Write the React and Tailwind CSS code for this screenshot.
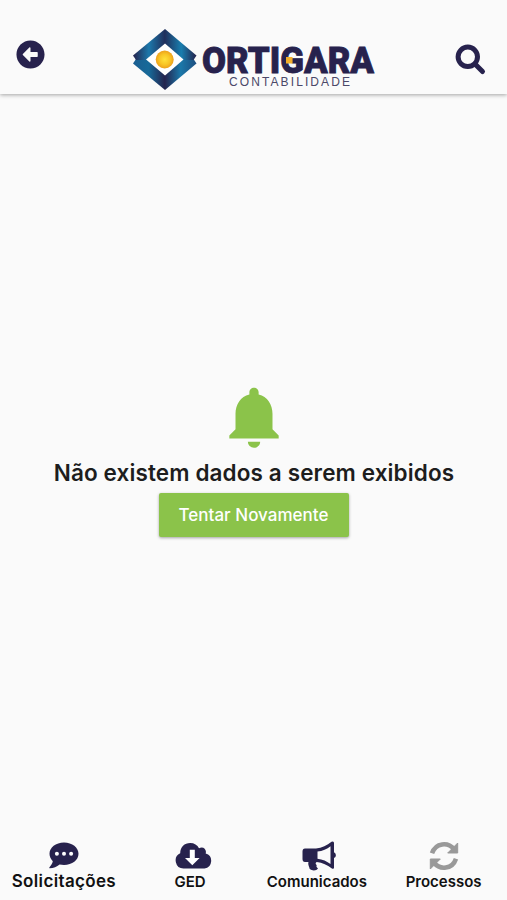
import { FaArrowAltCircleLeft } from "react-icons/fa";
import { MdNotifications } from "react-icons/md";

function Logo() {
  return (
    <svg className="block h-[64px] w-[244px] overflow-visible" viewBox="132 28 244 64" role="img" aria-label="Ortigara Contabilidade">
      <defs>
        <linearGradient id="upperBlue" x1="0" x2="1">
          <stop offset="0" stopColor="#25234c" />
          <stop offset="0.25" stopColor="#1c78ab" />
          <stop offset="0.5" stopColor="#202f5c" />
          <stop offset="0.76" stopColor="#197eae" />
          <stop offset="1" stopColor="#25234c" />
        </linearGradient>
        <linearGradient id="lowerBlue" x1="0" x2="1">
          <stop offset="0" stopColor="#1b5e91" />
          <stop offset="0.25" stopColor="#176a99" />
          <stop offset="0.5" stopColor="#24234d" />
          <stop offset="0.75" stopColor="#1b78a9" />
          <stop offset="1" stopColor="#1d4e80" />
        </linearGradient>
        <radialGradient id="sun">
          <stop offset="0" stopColor="#ffe13c" />
          <stop offset="0.6" stopColor="#f8c425" />
          <stop offset="1" stopColor="#eda01c" />
        </radialGradient>
      </defs>
      <path fill="url(#lowerBlue)" d="M133 63.500 L136 59 H193.500 L196.500 63.500 L165 90Z" />
      <path fill="url(#upperBlue)" d="M165 29 L196.500 55.500 L193.500 60 H136 L133 55.500Z" />
      <path fill="#fff" d="M165 43.500 L183.500 59.500 L165 75.500 L146 59.500Z" />
      <circle cx="164.700" cy="59.500" r="9" fill="url(#sun)" />
      <text x="202" y="72.500" textLength="172" lengthAdjust="spacingAndGlyphs" fill="#27224d" stroke="#27224d" strokeWidth="0.800" className="font-['Roboto',sans-serif] text-[36px] font-black">ORTIGARA</text>
      <rect x="286" y="57" width="6.500" height="6.500" fill="#f3ae2b" />
      <text x="229" y="86" textLength="121" fill="#4b4868" className="font-['Liberation_Sans',sans-serif] text-[12px]">CONTABILIDADE</text>
    </svg>
  );
}

function SearchIcon() {
  return (
    <svg className="block h-8 w-8" viewBox="0 0 32 32" fill="none" stroke="#27224d" aria-hidden="true">
      <circle cx="12.800" cy="12.800" r="9.700" strokeWidth="5" />
      <path d="M20 20 L27.500 27.500" strokeWidth="5" strokeLinecap="round" />
    </svg>
  );
}

function ChatIcon() {
  return (
    <svg className="ml-[2px] h-[30px] w-[30px]" viewBox="0 0 30 30" aria-hidden="true">
      <path fill="#27224d" d="M15 1.500C23.300 1.500 29.500 6.500 29.500 12.800S23.300 24 15 24c-1.500 0-3-.2-4.400-.5C7.800 25.700 4.600 27.200 .8 27.200c-.5 0-.7-.6-.3-1 1.600-1.700 3-3.900 3.300-5.900C1.800 18.200.5 15.700.5 12.800.5 6.500 6.700 1.500 15 1.500Z" />
      <g fill="#fff">
        <circle cx="7.900" cy="12.800" r="2" />
        <circle cx="15" cy="12.800" r="2" />
        <circle cx="22.100" cy="12.800" r="2" />
      </g>
    </svg>
  );
}

function CloudIcon() {
  return (
    <svg className="ml-[7px] h-[30px] w-[37px]" viewBox="0 0 37 30" aria-hidden="true">
      <path fill="#27224d" d="M8.500 27.500A8 8 0 0 1 5.200 12.300C5.200 6 9.500 2 15.200 2c4 0 7.200 2 8.800 5.200C27.800 4.800 32 8 30.700 12.500A7.700 7.700 0 0 1 29.500 27.500Z" />
      <path fill="#fff" d="M14.800 8.700H19.800V17H24.600L17.300 24.300 10 17H14.800Z" />
    </svg>
  );
}

function BullhornIcon() {
  return (
    <svg className="ml-[4px] h-[30px] w-[34px]" viewBox="0 0 34 30" aria-hidden="true">
      <path fill="#27224d" d="M3 7.500H14C20 7 25 4.500 29.500 .8Q32 -.3 32 2V11.200Q33.900 12 33.900 14.200T32 17V26.500Q32 28.500 29.500 27.200C25.500 24 20.500 21.500 14.700 20.900Q12.500 22.500 14.800 24.200Q13.600 26 16 27.500C14.500 30 10 30 7.700 28C7 25 5.700 23.500 6.500 21H3Q.5 21 .5 18V10.500Q.5 7.500 3 7.500Z" />
      <path fill="#fafafa" d="M15.500 10.600C20.500 10 25 8 28.500 5.200V23C25 20.300 20.500 18.300 15.500 17.700Z" />
    </svg>
  );
}

function SyncIcon() {
  return (
    <svg className="h-[30px] w-[30px]" viewBox="0 0 30 30" fill="none" stroke="#999" aria-hidden="true">
      <path strokeWidth="4.600" d="M3 12.300C6.700 1.500 19 .8 25 8.200" />
      <path strokeWidth="4.600" d="M27 17.700C23.300 28.500 11 29.200 5 21.800" />
      <path fill="#999" strokeWidth="1" strokeLinejoin="round" d="M28.700 2V12H18.700ZM1.300 28V18H11.300Z" />
    </svg>
  );
}

export default function App() {
  return (
    <div className="flex h-[900px] w-full flex-col overflow-hidden bg-[#fafafa] font-['Inter',sans-serif] text-[#1d1d1d]">
      <header className="flex h-[94px] shrink-0 items-start justify-between pr-[20px] pl-[16px] shadow-[0_1px_4px_rgba(0,0,0,0.35)]">
        <button aria-label="Voltar" className="mt-[40px] w-[33px]">
          <FaArrowAltCircleLeft className="size-[29px] text-[#27224d]" />
        </button>
        <div className="mt-[28px] ml-[4px]">
          <Logo />
        </div>
        <button aria-label="Buscar" className="mt-[44px]">
          <SearchIcon />
        </button>
      </header>

      <main className="flex flex-1 flex-col items-center pt-[286px]">
        <MdNotifications className="size-[74px] shrink-0 text-[#8bc34a]" />
        <h1 className="mt-[5px] pl-px text-[22.500px] leading-[28px] font-semibold tracking-[0.120px] whitespace-nowrap">
          Não existem dados a serem exibidos
        </h1>
        <button className="mt-[6px] h-[44px] w-[190px] rounded-[2px] bg-[#8bc34a] pt-[2px] text-[17px] font-medium tracking-[0.020px] whitespace-nowrap text-white shadow-[0_1px_3px_rgba(0,0,0,0.35)]">
          Tentar Novamente
        </button>
      </main>

      <nav className="grid h-[68px] shrink-0 grid-cols-4 font-semibold text-[#111]">
        <div className="flex flex-col items-center pt-[9px]">
          <ChatIcon />
          <span className="pl-px text-[17px] leading-[20px] tracking-[0.350px]">Solicitações</span>
        </div>
        <div className="flex flex-col items-center pt-[9px]">
          <CloudIcon />
          <span className="pt-px text-[15px] leading-[20px]">GED</span>
        </div>
        <div className="flex flex-col items-center pt-[9px]">
          <BullhornIcon />
          <span className="pt-px text-[15px] leading-[20px]">Comunicados</span>
        </div>
        <div className="flex flex-col items-center pt-[9px]">
          <SyncIcon />
          <span className="pt-px text-[15px] leading-[20px]">Processos</span>
        </div>
      </nav>
    </div>
  );
}
